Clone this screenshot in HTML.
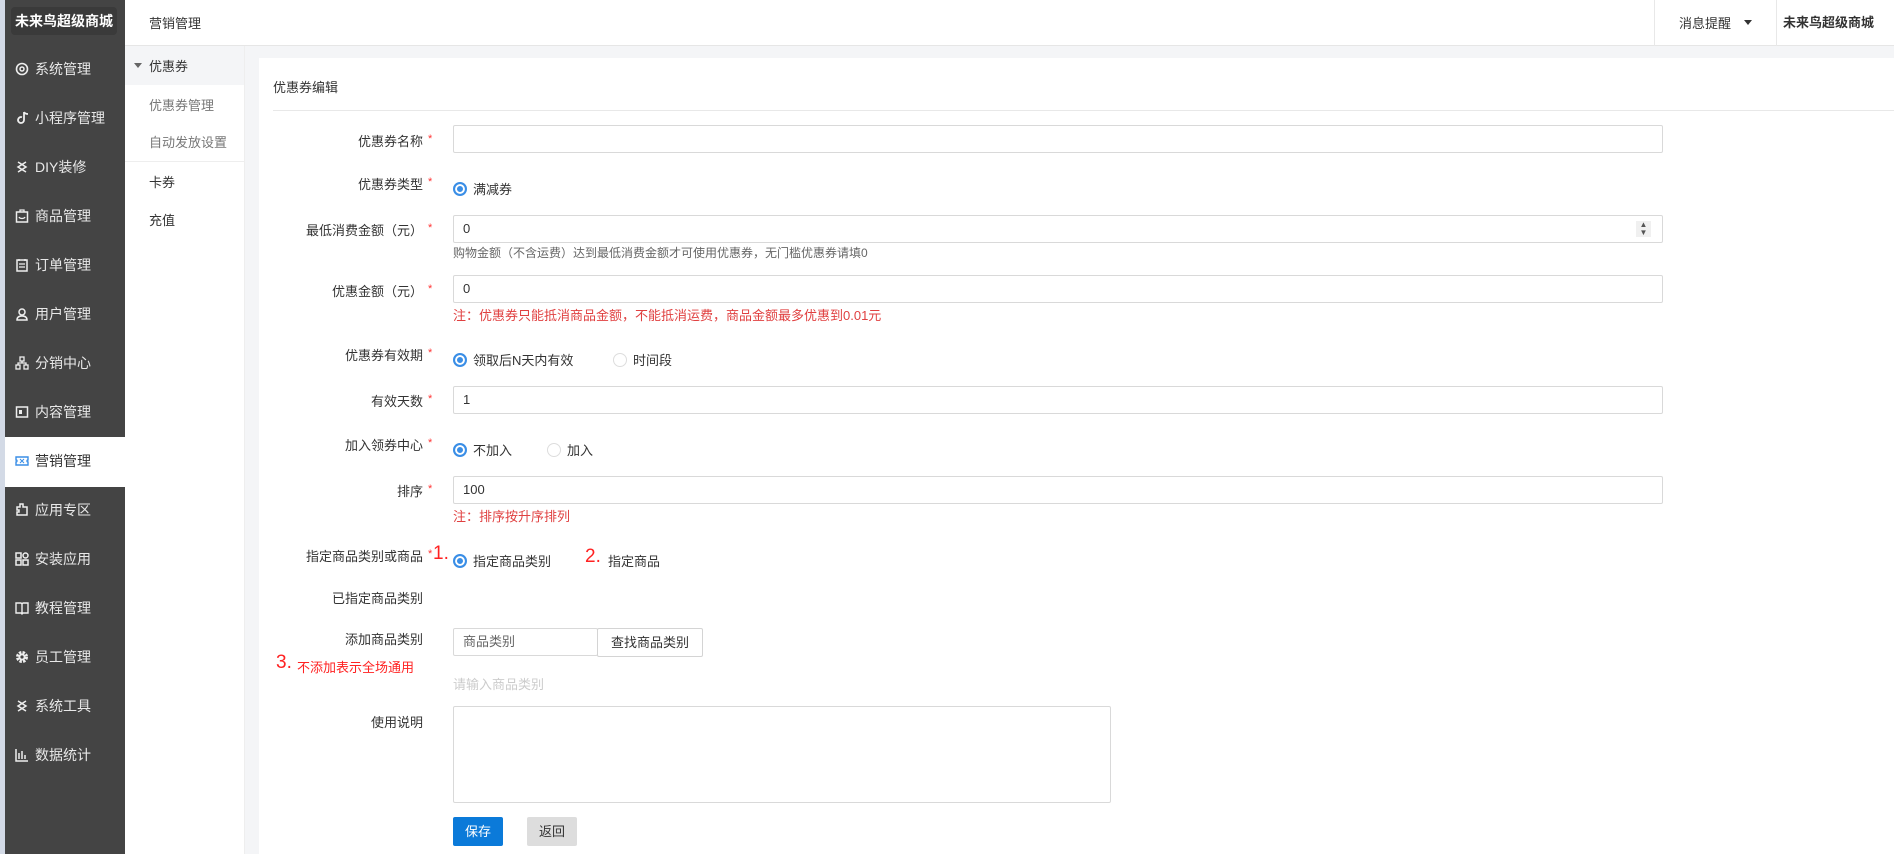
<!DOCTYPE html>
<html><head><meta charset="utf-8">
<style>
*{box-sizing:border-box;margin:0;padding:0}
body{width:1894px;height:854px;overflow:hidden;background:#f4f5f7;font-family:"Liberation Sans","Noto Sans CJK SC",sans-serif;font-size:14px;color:#333;position:relative}
.abs{position:absolute}
.strip{left:0;top:0;width:5px;height:854px;background:#d3dae6}
.side{left:5px;top:0;width:120px;height:854px;background:#444}
.logo{left:11px;top:7px;width:106px;height:28px;background:#3a3a3a;border-radius:4px;color:#fff;font-weight:bold;font-size:14px;line-height:28px;text-align:center}
.mi{left:5px;width:120px;height:49px;color:#e8e8e8;font-size:14px;line-height:49px;padding-left:30px}
.mi svg{position:absolute;left:10px;top:17px}
.mi.act{background:#fff;color:#333}
.col2{left:125px;top:0;width:120px;height:854px;background:#fff;border-right:1px solid #eee}
.hdr{left:245px;top:0;width:1649px;height:46px;background:#fff;border-bottom:1px solid #e6e6e6}
.lbl{right:calc(1894px - 423px);text-align:right;white-space:nowrap;font-size:13px;color:#333}
.star{color:#f33;font-size:11px}
.inp{left:453px;width:1210px;height:28px;border:1px solid #d9d9d9;border-radius:2px;background:#fff;font-size:13px;line-height:26px;padding-left:9px}
.help{left:453px;font-size:12px;color:#666}
.red{left:453px;font-size:13px;color:#e04040}
.radio{display:inline-block;width:14px;height:14px;border-radius:50%;border:1px solid #ddd;vertical-align:-2px;margin-right:6px;background:#fff}
.radio.on{border:2px solid #3a8ee6;box-shadow:inset 0 0 0 2px #fff;background:#3a8ee6}
.ropt{font-size:13px;color:#333}
</style></head><body>
<div class="abs strip"></div>
<div class="abs side"></div>
<div class="abs logo">未来鸟超级商城</div>

<div class="abs mi" style="top:45px"><svg width="14" height="14" viewBox="0 0 14 14"><circle cx="7" cy="7" r="5.5" fill="none" stroke="#eee" stroke-width="1.6"/><circle cx="7" cy="7" r="2" fill="none" stroke="#eee" stroke-width="1.5"/></svg>系统管理</div>
<div class="abs mi" style="top:94px"><svg width="14" height="14" viewBox="0 0 14 14"><path d="M9 1v8a3 3 0 1 1-2-2.8M9 1c1 2 3 2 4 2" fill="none" stroke="#eee" stroke-width="1.8"/></svg>小程序管理</div>
<div class="abs mi" style="top:143px"><svg width="14" height="14" viewBox="0 0 14 14"><path d="M3 2l8 5-8 5M11 2L3 7l8 5" fill="none" stroke="#eee" stroke-width="1.5"/></svg>DIY装修</div>
<div class="abs mi" style="top:192px"><svg width="14" height="14" viewBox="0 0 14 14"><rect x="1.5" y="3" width="11" height="10" fill="none" stroke="#eee" stroke-width="1.5"/><path d="M5 3V1h4v2M4 8c1 2 5 2 6 0" fill="none" stroke="#eee" stroke-width="1.3"/></svg>商品管理</div>
<div class="abs mi" style="top:241px"><svg width="14" height="14" viewBox="0 0 14 14"><rect x="2" y="2" width="10" height="11" fill="none" stroke="#eee" stroke-width="1.5"/><path d="M4 1v2M10 1v2M4 6h6M4 9h6" stroke="#eee" stroke-width="1.3"/></svg>订单管理</div>
<div class="abs mi" style="top:290px"><svg width="14" height="14" viewBox="0 0 14 14"><circle cx="7" cy="5" r="3" fill="none" stroke="#eee" stroke-width="1.5"/><path d="M2 13c0-3 2-4 5-4s5 1 5 4z" fill="none" stroke="#eee" stroke-width="1.5"/></svg>用户管理</div>
<div class="abs mi" style="top:339px"><svg width="14" height="14" viewBox="0 0 14 14"><rect x="5" y="1" width="4" height="4" fill="none" stroke="#eee" stroke-width="1.3"/><rect x="1" y="9" width="4" height="4" fill="none" stroke="#eee" stroke-width="1.3"/><rect x="9" y="9" width="4" height="4" fill="none" stroke="#eee" stroke-width="1.3"/><path d="M7 5v2M3 9V7h8v2" fill="none" stroke="#eee" stroke-width="1.3"/></svg>分销中心</div>
<div class="abs mi" style="top:388px"><svg width="14" height="14" viewBox="0 0 14 14"><rect x="1.5" y="2" width="11" height="10" fill="none" stroke="#eee" stroke-width="1.5"/><rect x="4" y="5" width="3" height="4" fill="#eee"/></svg>内容管理</div>
<div class="abs mi act" style="top:437px;height:50px"><svg width="14" height="14" viewBox="0 0 14 14"><path d="M1 3h12v3a1 1 0 0 0 0 2v3H1V8a1 1 0 0 0 0-2z" fill="none" stroke="#3a8ee6" stroke-width="1.4"/><path d="M5 5l4 4M9 5L5 9" stroke="#3a8ee6" stroke-width="1"/></svg>营销管理</div>
<div class="abs mi" style="top:486px"><svg width="14" height="14" viewBox="0 0 14 14"><path d="M2 4h3V1h3v3h4v8H2v-3h2V7H2z" fill="none" stroke="#eee" stroke-width="1.5"/></svg>应用专区</div>
<div class="abs mi" style="top:535px"><svg width="14" height="14" viewBox="0 0 14 14"><rect x="1" y="1" width="5" height="5" fill="none" stroke="#eee" stroke-width="1.5"/><circle cx="10.5" cy="3.5" r="2.5" fill="none" stroke="#eee" stroke-width="1.5"/><rect x="1" y="8" width="5" height="5" fill="none" stroke="#eee" stroke-width="1.5"/><rect x="8" y="8" width="5" height="5" fill="none" stroke="#eee" stroke-width="1.5"/></svg>安装应用</div>
<div class="abs mi" style="top:584px"><svg width="14" height="14" viewBox="0 0 14 14"><path d="M1 2h5l1 1 1-1h5v10H8l-1 1-1-1H1zM7 3v9" fill="none" stroke="#eee" stroke-width="1.4"/></svg>教程管理</div>
<div class="abs mi" style="top:633px"><svg width="14" height="14" viewBox="0 0 14 14"><circle cx="7" cy="7" r="4.5" fill="none" stroke="#eee" stroke-width="3" stroke-dasharray="2.4 1.2"/><circle cx="7" cy="7" r="3.5" fill="#eee"/><circle cx="7" cy="7" r="1.6" fill="#444"/></svg>员工管理</div>
<div class="abs mi" style="top:682px"><svg width="14" height="14" viewBox="0 0 14 14"><path d="M3 2l8 5-8 5M11 2L3 7l8 5" fill="none" stroke="#eee" stroke-width="1.5"/></svg>系统工具</div>
<div class="abs mi" style="top:731px"><svg width="14" height="14" viewBox="0 0 14 14"><path d="M1 1v12h12M4 11V5M7 11V3M10 11V7" fill="none" stroke="#eee" stroke-width="1.5"/></svg>数据统计</div>

<div class="abs col2"></div>
<div class="abs" style="left:125px;top:0;width:120px;height:46px;border-bottom:1px solid #e6e6e6;background:#fff"></div>
<div class="abs" style="left:149px;top:13px;font-size:13px">营销管理</div>
<div class="abs" style="left:125px;top:46px;width:119px;height:39px;background:#f4f5f7"></div>
<div class="abs" style="left:134px;top:63px;width:0;height:0;border-left:4px solid transparent;border-right:4px solid transparent;border-top:5px solid #666"></div>
<div class="abs" style="left:149px;top:56px;font-size:13px">优惠券</div>
<div class="abs" style="left:149px;top:95px;font-size:13px;color:#777">优惠券管理</div>
<div class="abs" style="left:149px;top:132px;font-size:13px;color:#777">自动发放设置</div>
<div class="abs" style="left:125px;top:161px;width:119px;height:1px;background:#eee"></div>
<div class="abs" style="left:149px;top:172px;font-size:13px">卡券</div>
<div class="abs" style="left:149px;top:210px;font-size:13px">充值</div>

<div class="abs hdr"></div>
<div class="abs" style="left:1654px;top:0;width:1px;height:46px;background:#e8e8e8"></div>
<div class="abs" style="left:1776px;top:0;width:1px;height:46px;background:#e8e8e8"></div>
<div class="abs" style="left:1679px;top:13px;font-size:13px">消息提醒</div>
<div class="abs" style="left:1744px;top:20px;width:0;height:0;border-left:4px solid transparent;border-right:4px solid transparent;border-top:5px solid #333"></div>
<div class="abs" style="left:1783px;top:12px;font-size:13px;font-weight:bold">未来鸟超级商城</div>

<div class="abs" style="left:259px;top:58px;width:1635px;height:796px;background:#fff"></div>
<div class="abs" style="left:273px;top:77px;font-size:13px">优惠券编辑</div>
<div class="abs" style="left:273px;top:110px;width:1621px;height:1px;background:#e8e8e8"></div>

<div class="abs lbl" style="top:131px">优惠券名称</div><div class="abs star" style="left:428px;top:133px">*</div>
<div class="abs inp" style="top:125px"></div>

<div class="abs lbl" style="top:174px">优惠券类型</div><div class="abs star" style="left:428px;top:176px">*</div>
<div class="abs ropt" style="left:453px;top:179px"><span class="radio on"></span>满减券</div>

<div class="abs lbl" style="top:220px">最低消费金额（元）</div><div class="abs star" style="left:428px;top:222px">*</div>
<div class="abs inp" style="top:215px">0</div>
<div class="abs" style="left:1636px;top:221px;width:15px;height:16px;background:#f0f0f0;font-size:8px;line-height:8px;text-align:center;color:#555">▲<br>▼</div>
<div class="abs help" style="top:244px">购物金额（不含运费）达到最低消费金额才可使用优惠券，无门槛优惠券请填0</div>

<div class="abs lbl" style="top:281px">优惠金额（元）</div><div class="abs star" style="left:428px;top:283px">*</div>
<div class="abs inp" style="top:275px">0</div>
<div class="abs red" style="top:305px">注：优惠券只能抵消商品金额，不能抵消运费，商品金额最多优惠到0.01元</div>

<div class="abs lbl" style="top:345px">优惠券有效期</div><div class="abs star" style="left:428px;top:347px">*</div>
<div class="abs ropt" style="left:453px;top:350px"><span class="radio on"></span>领取后N天内有效</div>
<div class="abs ropt" style="left:613px;top:350px"><span class="radio"></span>时间段</div>

<div class="abs lbl" style="top:391px">有效天数</div><div class="abs star" style="left:428px;top:393px">*</div>
<div class="abs inp" style="top:386px">1</div>

<div class="abs lbl" style="top:435px">加入领券中心</div><div class="abs star" style="left:428px;top:437px">*</div>
<div class="abs ropt" style="left:453px;top:440px"><span class="radio on"></span>不加入</div>
<div class="abs ropt" style="left:547px;top:440px"><span class="radio"></span>加入</div>

<div class="abs lbl" style="top:481px">排序</div><div class="abs star" style="left:428px;top:483px">*</div>
<div class="abs inp" style="top:476px">100</div>
<div class="abs red" style="top:506px">注：排序按升序排列</div>

<div class="abs lbl" style="top:546px">指定商品类别或商品</div><div class="abs star" style="left:428px;top:548px">*</div>
<div class="abs" style="left:433px;top:543px;font-size:19px;color:#f22">1.</div>
<div class="abs ropt" style="left:453px;top:551px"><span class="radio on"></span>指定商品类别</div>
<div class="abs" style="left:585px;top:546px;font-size:19px;color:#f22">2.</div>
<div class="abs ropt" style="left:608px;top:551px">指定商品</div>

<div class="abs lbl" style="top:588px">已指定商品类别</div>

<div class="abs lbl" style="top:629px">添加商品类别</div>
<div class="abs" style="left:276px;top:652px;font-size:19px;color:#f22">3.</div>
<div class="abs" style="left:297px;top:657px;font-size:13px;color:#f22">不添加表示全场通用</div>
<div class="abs inp" style="top:628px;width:145px;color:#666">商品类别</div>
<div class="abs" style="left:597px;top:628px;width:106px;height:29px;border:1px solid #d4d4d4;border-radius:2px;background:#fff;font-size:13px;line-height:27px;text-align:center">查找商品类别</div>
<div class="abs" style="left:453px;top:674px;font-size:13px;color:#ccc">请输入商品类别</div>

<div class="abs lbl" style="top:712px">使用说明</div>
<div class="abs inp" style="top:706px;width:658px;height:97px"></div>

<div class="abs" style="left:453px;top:817px;width:50px;height:29px;background:#0b7ad9;border-radius:2px;color:#fff;font-size:13px;line-height:29px;text-align:center">保存</div>
<div class="abs" style="left:527px;top:817px;width:50px;height:29px;background:#ddd;border-radius:2px;color:#333;font-size:13px;line-height:29px;text-align:center">返回</div>
</body></html>
